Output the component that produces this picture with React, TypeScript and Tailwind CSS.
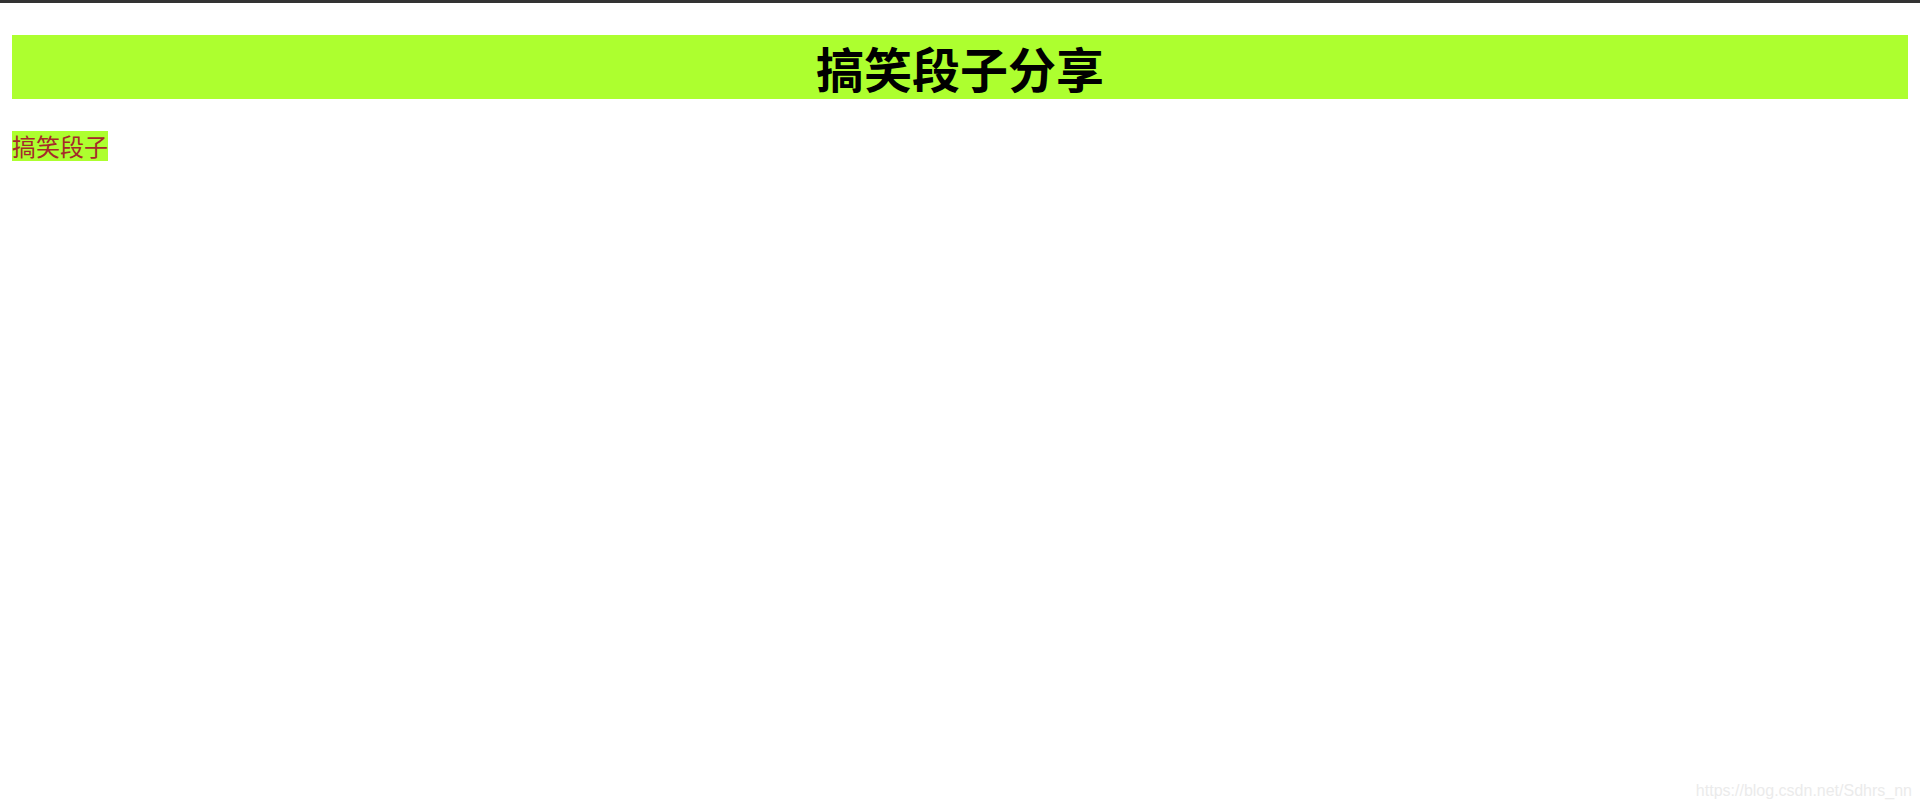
import React from 'react';

const cjk = { fontFamily: '"Microsoft YaHei", "Noto Sans CJK SC", sans-serif' };

const App: React.FC = () => {
  return (
    <div className="relative min-h-screen bg-white border-t-[3px] border-[#333333]">
      <div className="px-3 pt-8">
        <h1
          className="h-16 flex items-center justify-center bg-[#adff2f] text-black text-[48px] font-bold leading-none"
          style={cjk}
        >
          搞笑段子分享
        </h1>

        <div className="mt-8">
          <span
            className="inline-block h-[30px] leading-[30px] bg-[#adff2f] text-[#a52a2a] text-[24px]"
            style={cjk}
          >
            搞笑段子
          </span>
        </div>
      </div>

      <span className="absolute right-2 bottom-[8px] text-[16px] leading-[18px] text-[#ebebeb] font-['Liberation_Sans',Arial,sans-serif]">
        https://blog.csdn.net/Sdhrs_nn
      </span>
    </div>
  );
};

export default App;
